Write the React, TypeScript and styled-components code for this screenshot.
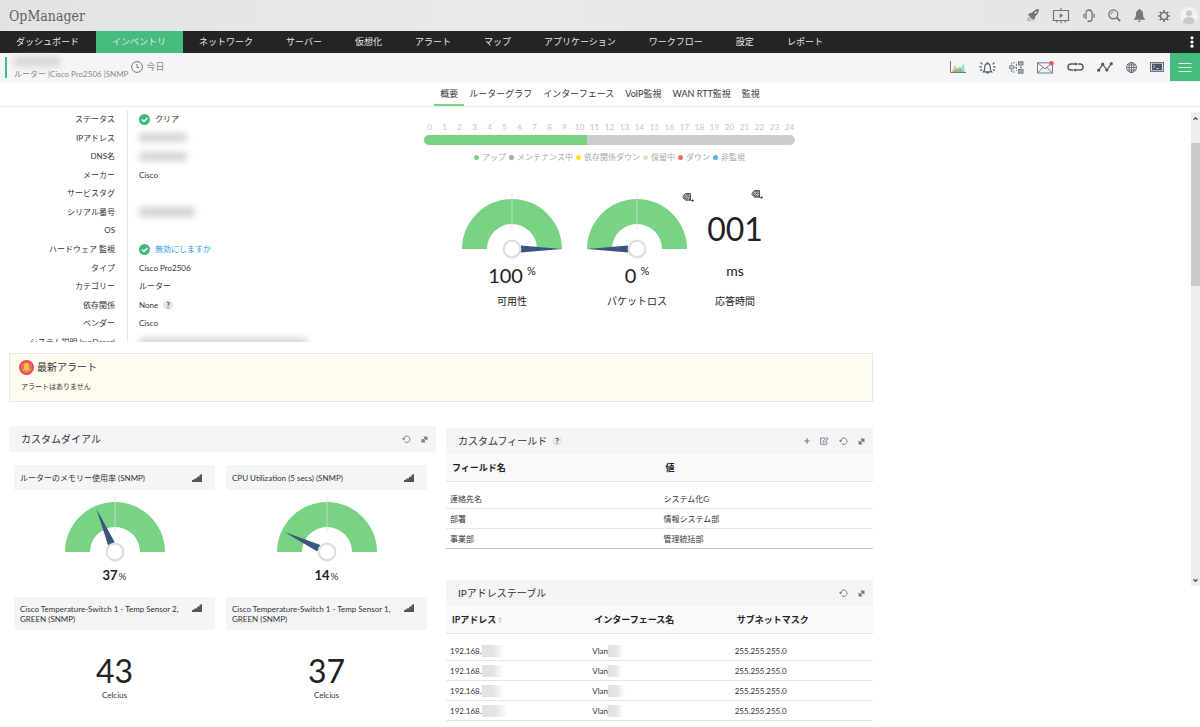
import React from 'react';
import styled, { createGlobalStyle } from 'styled-components';

const GREEN = '#46bb7e';
const GAUGE_GREEN = '#78d385';

const GlobalStyle = createGlobalStyle`
  * { box-sizing: border-box; }
  body {
    margin: 0;
    background: #fff;
    color: #333;
    font-family: Lato, "Noto Sans CJK JP", sans-serif;
    font-size: 8px;
    line-height: 12px;
  }
  h1, h2, h3, p, dl, dd, dt, ul { margin: 0; padding: 0; font-weight: 400; }
  ul { list-style: none; }
  a { color: inherit; text-decoration: none; }
  button { border: 0; padding: 0; margin: 0; background: none; font: inherit; color: inherit; }
  svg { display: block; flex: none; }
`;

/* ---------- top bars ---------- */

const Header = styled.header`
  display: flex;
  align-items: center;
  justify-content: space-between;
  height: 31px;
  padding: 0 2px 0 9px;
  background: linear-gradient(90deg, #e2e3e5, #e8e9eb 40%, #e4e5e7);
`;

const Brand = styled.h1`
  color: #606266;
  font-family: "Roboto Slab", "DejaVu Serif Condensed", "DejaVu Serif", serif;
  font-size: 14px;
  line-height: 20px;
`;

const HeaderTools = styled.div`
  display: flex;
  align-items: center;
  gap: 13px;
  color: #737579;
`;

const IconButton = styled.button`
  display: flex;
  align-items: center;
  justify-content: center;
  flex: none;
`;

const AvatarButton = styled(IconButton)`
  margin-left: -3px;
`;

const MainNav = styled.nav`
  display: flex;
  justify-content: space-between;
  height: 22px;
  background: #242424;
  color: #e8e8e8;
  font-size: 9px;
`;

const NavList = styled.ul`
  display: flex;
`;

const NavLink = styled.a<{ $active?: boolean }>`
  display: flex;
  align-items: center;
  height: 22px;
  padding: 0 17px 0 16px;
  white-space: nowrap;
  background: ${(p) => (p.$active ? GREEN : 'transparent')};
`;

const KebabButton = styled(IconButton)`
  width: 17px;
`;

const DeviceBar = styled.section`
  display: flex;
  align-items: stretch;
  justify-content: space-between;
  height: 28px;
  background: #f4f5f7;
  color: #888;
`;

const DeviceInfo = styled.div`
  display: flex;
  align-items: center;
  padding-left: 5px;
`;

const DeviceTitle = styled.div`
  display: flex;
  flex-direction: column;
  justify-content: space-between;
  height: 21px;
  padding-left: 7px;
  border-left: 2px solid ${GREEN};
  white-space: nowrap;
  line-height: 8px;
`;

const Period = styled.button`
  display: flex;
  align-items: center;
  gap: 3px;
  margin-left: 3px;
  font-size: 9px;
`;

const DeviceTools = styled.div`
  display: flex;
  align-items: center;
  gap: 13px;
  color: #555b66;
`;

const MenuButton = styled(IconButton)`
  align-self: stretch;
  width: 30px;
  margin-left: -7px;
  background: ${GREEN};
  color: #fff;
`;

const Tabs = styled.nav`
  display: flex;
  justify-content: center;
  gap: 11px;
  height: 26px;
  border-top: 1px solid #f0f0f0;
  border-bottom: 1px solid #ececec;
  font-size: 9px;
`;

const Tab = styled.a<{ $active?: boolean }>`
  position: relative;
  display: flex;
  align-items: center;
  white-space: nowrap;
  &::after {
    content: '';
    display: ${(p) => (p.$active ? 'block' : 'none')};
    position: absolute;
    left: -6px;
    right: -6px;
    bottom: 0;
    height: 2px;
    background: ${GAUGE_GREEN};
  }
`;

/* ---------- page body ---------- */

const Body = styled.div`
  display: flex;
  align-items: flex-start;
`;

const Main = styled.main`
  flex: 1;
  min-width: 0;
  padding: 0 26.5% 5px 9px;
`;

const ScrollTrack = styled.div`
  display: flex;
  flex-direction: column;
  align-items: center;
  flex: none;
  width: 9px;
  height: 473px;
  margin-top: 6px;
  background: #eee;
  color: #555;
`;

const ScrollArrow = styled(IconButton)`
  width: 9px;
  height: 11px;
`;

const ScrollThumb = styled.div`
  width: 9px;
  height: 143px;
  margin: 19px 0 auto;
  background: #cbcbcb;
`;

const Overview = styled.section`
  display: grid;
  grid-template-columns: 415fr 371fr 78fr;
  height: 235px;
  overflow: hidden;
`;

const Details = styled.dl`
  display: grid;
  grid-template-columns: 119px 1fr;
  grid-template-rows: repeat(13, 1fr);
  height: 241px;
  margin-top: 3px;
`;

const Term = styled.dt`
  display: flex;
  align-items: center;
  justify-content: flex-end;
  padding-right: 12px;
  border-right: 1px solid #e6e6e6;
  white-space: nowrap;
`;

const Value = styled.dd`
  display: flex;
  align-items: center;
  gap: 5px;
  padding-left: 11px;
`;

const BlueLink = styled.a`
  color: #2a98f0;
`;

const Redacted = styled.span<{ $w: number; $h?: number }>`
  display: block;
  width: ${(p) => p.$w}px;
  height: ${(p) => p.$h ?? 9}px;
  border-radius: 3px;
  background: #d4d4d4;
  filter: blur(3px);
`;

const HelpButton = styled.button`
  flex: none;
  width: 10px;
  height: 10px;
  border-radius: 50%;
  background: #e6e7e8;
  color: #333;
  font-size: 7px;
  font-weight: 700;
  line-height: 10px;
  text-align: center;
`;

const Availability = styled.div`
  display: flex;
  flex-direction: column;
  min-width: 0;
  padding-top: 14px;
`;

const Hours = styled.div`
  display: flex;
  justify-content: space-between;
  margin: 0 -2px;
  color: #c4c4c4;
`;

const Hour = styled.span`
  width: 15px;
  text-align: center;
`;

const UptimeBar = styled.div`
  display: flex;
  height: 10px;
  margin-top: 2px;
  border-radius: 5px;
  background: #cdcdcd;
  overflow: hidden;
`;

const UptimeFill = styled.div`
  width: 44%;
  background: ${GAUGE_GREEN};
`;

const Legend = styled.ul`
  display: flex;
  justify-content: center;
  gap: 3px;
  margin-top: 6px;
  color: #a8a8a8;
  white-space: nowrap;
`;

const LegendItem = styled.li<{ $color: string }>`
  display: flex;
  align-items: center;
  gap: 3px;
  &::before {
    content: '';
    width: 5px;
    height: 5px;
    border-radius: 50%;
    background: ${(p) => p.$color};
  }
`;

const Meters = styled.div`
  display: flex;
  gap: 15px;
  margin-top: 29px;
  padding-left: 33px;
`;

const Meter = styled.figure`
  position: relative;
  display: flex;
  flex-direction: column;
  align-items: center;
  justify-content: flex-end;
  min-width: 56px;
  margin: 0;
  color: #222;
`;

const MeterValue = styled.div`
  display: flex;
  align-items: flex-start;
  gap: 4px;
  height: 24px;
  margin-top: 4px;
  font-size: 20px;
  line-height: 24px;
`;

const MeterUnit = styled.sup`
  font-size: 11px;
  line-height: 16px;
  vertical-align: baseline;
`;

const MeterNumber = styled.div`
  font-size: 32px;
  line-height: 40px;
`;

const MeterMs = styled.div`
  margin-top: 12px;
  font-size: 14px;
  line-height: 20px;
`;

const MeterLabel = styled.figcaption<{ $gap?: number }>`
  margin-top: ${(p) => p.$gap ?? 7}px;
  font-size: 10px;
  line-height: 14px;
`;

const MeterAction = styled(IconButton)<{ $top: number; $right: number }>`
  position: absolute;
  top: ${(p) => p.$top}px;
  right: ${(p) => p.$right}px;
`;

const AlertBox = styled.section`
  display: flex;
  flex-direction: column;
  gap: 5px;
  height: 49px;
  margin-top: 11px;
  padding: 5px 9px;
  border: 1px solid #e9e8e4;
  background: #fffbee;
`;

const AlertTitle = styled.h2`
  display: flex;
  align-items: center;
  gap: 3px;
  font-size: 10px;
  line-height: 16px;
`;

const AlertText = styled.p`
  padding-left: 2px;
  font-size: 7px;
`;

const Widgets = styled.div`
  display: grid;
  grid-template-columns: 1fr 1fr;
  gap: 10px;
  margin-top: 24px;
`;

const Column = styled.div<{ $top?: number }>`
  min-width: 0;
  padding-top: ${(p) => p.$top ?? 0}px;
`;

const Widget = styled.section`
  & + & { margin-top: 31px; }
`;

const WidgetHeader = styled.header`
  display: flex;
  align-items: center;
  justify-content: space-between;
  height: 26px;
  padding: 0 8px 0 12px;
  background: #f4f5f7;
  color: #7b7d81;
`;

const WidgetTitle = styled.h2`
  display: flex;
  align-items: center;
  gap: 5px;
  color: #333;
  font-size: 10px;
  line-height: 16px;
`;

const WidgetTools = styled.div`
  display: flex;
  align-items: center;
  gap: 10px;
`;

const Dials = styled.div`
  display: grid;
  grid-template-columns: 1fr 1fr;
  column-gap: 11px;
  padding: 13px 9px 0 5px;
`;

const Dial = styled.article<{ $tall?: boolean }>`
  display: flex;
  flex-direction: column;
  align-items: center;
  height: ${(p) => (p.$tall ? 'auto' : '132px')};
`;

const DialHeader = styled.header<{ $tall?: boolean }>`
  display: flex;
  align-items: ${(p) => (p.$tall ? 'flex-start' : 'center')};
  justify-content: space-between;
  align-self: stretch;
  gap: 8px;
  height: ${(p) => (p.$tall ? 33 : 25)}px;
  margin-bottom: ${(p) => (p.$tall ? 22 : 5)}px;
  padding: ${(p) => (p.$tall ? 7 : 0)}px 13px 0 6px;
  background: #f4f5f7;
  color: #333;
`;

const DialTitle = styled.h3`
  font-size: 8px;
  line-height: 10px;
`;

const DialPercent = styled.div`
  margin-top: 5px;
  font-size: 10px;
  line-height: 16px;
`;

const DialStrong = styled.strong`
  margin-right: 1px;
  color: #222;
  font-size: 13px;
  font-weight: 700;
`;

const DialNumber = styled.div`
  color: #222;
  font-size: 32px;
  line-height: 37px;
`;

const Table = styled.table`
  width: 100%;
  table-layout: fixed;
  margin-top: 1px;
  border-collapse: separate;
  border-spacing: 0;
`;

const HeadCell = styled.th`
  height: 27px;
  padding: 0 0 0 6px;
  border-bottom: 1px solid #e4e4e4;
  background: #f9f9f9;
  color: #222;
  font-size: 9px;
  font-weight: 700;
  text-align: left;
  vertical-align: middle;
`;

const TableBody = styled.tbody`
  &::before {
    content: '';
    display: block;
    height: 7px;
  }
`;

const Row = styled.tr<{ $dark?: boolean }>`
  & > td { border-bottom: 1px solid ${(p) => (p.$dark ? '#c4c4c4' : '#e6e6e6')}; }
`;

const Cell = styled.td`
  height: 20px;
  padding: 0 0 0 4px;
  vertical-align: middle;
`;

const CellLine = styled.span`
  display: flex;
  align-items: center;
`;

const HeadLine = styled(CellLine)`
  gap: 2px;
`;

const CellMask = styled.span<{ $w: number }>`
  width: ${(p) => p.$w}px;
  height: 12px;
  background: linear-gradient(90deg, #dfe1e3, #e3e4e6 50%, #fff);
`;

/* ---------- icons ---------- */

const RocketIcon = () => (
  <svg width="12" height="13" viewBox="0 0 12 13" fill="currentColor">
    <path d="M12 0C8.600 .2 6.300 1.600 4.800 4H2.600L.8 6.600 3 6.800l-.5 1 1.900 1.900 1-.5.3 2.200L8.100 9.600V7.400C10.600 5.800 11.900 3.400 12 0ZM8.700 2.400a1.100 1.100 0 1 1 0 2.200 1.100 1.100 0 0 1 0-2.200Z" fillRule="evenodd" />
    <path d="M1.900 8.600.3 10.200M2.900 9.600.5 12M3.900 10.700 2.300 12.300" stroke="currentColor" strokeWidth=".9" />
  </svg>
);

const ScreenIcon = () => (
  <svg width="18" height="16" viewBox="0 0 18 16" fill="none" stroke="currentColor" strokeWidth="1.200">
    <path d="M9 0v2M1 2.500h16M1.500 2.500v9.800M16.500 2.500v9.800M.5 12.500h17M9 12.500v2.800M5.500 12.500l-1 2M12.500 12.500l1 2" />
    <path d="M7.700 5v5l3.400-2.500Z" fill="currentColor" stroke="none" />
  </svg>
);

const HeadsetIcon = () => (
  <svg width="12" height="14" viewBox="0 0 12 14" fill="none" stroke="currentColor" strokeWidth="1.300">
    <path d="M3 10V4.200C3 2 4.200 1 6 1s3 1 3 3.200V10c0 1.600-.9 2.300-2.600 2.300" />
    <path d="M1 4.800v4M11 4.800v4" strokeWidth="1.300" />
    <rect x="4.600" y="11.400" width="2.200" height="1.800" fill="currentColor" stroke="none" />
  </svg>
);

const SearchIcon = () => (
  <svg width="13" height="13" viewBox="0 0 13 13" fill="none" stroke="currentColor">
    <circle cx="5.300" cy="5.300" r="4.500" strokeWidth="1.300" />
    <path d="M5.300 3A2.300 2.300 0 0 0 3 5.300" strokeWidth=".9" />
    <path d="m8.700 8.700 3.500 3.500" strokeWidth="1.900" />
  </svg>
);

const BellIcon = () => (
  <svg width="11" height="13" viewBox="0 0 11 13" fill="currentColor">
    <path d="M5.500 0c.6 0 1 .4 1 1 1.600.5 2.500 1.900 2.500 3.800 0 3 .6 4 2 5.200v.8H0V10c1.400-1.200 2-2.200 2-5.200C2 2.900 2.900 1.500 4.500 1c0-.6.4-1 1-1ZM4 11.400h3c-.1.900-.7 1.500-1.500 1.500S4.100 12.300 4 11.400Z" />
  </svg>
);

const GearIcon = () => (
  <svg width="12" height="12" viewBox="0 0 12 12" fill="none" stroke="currentColor">
    <circle cx="6" cy="6" r="3.500" strokeWidth="1.700" />
    {[0, 45, 90, 135, 180, 225, 270, 315].map((a) => (
      <path key={a} d="M6 0v2" strokeWidth="1.700" transform={`rotate(${a} 6 6)`} />
    ))}
  </svg>
);

const AvatarIcon = () => (
  <svg width="18" height="18" viewBox="0 0 18 18">
    <circle cx="9" cy="9" r="9" fill="#f3f3f3" />
    <circle cx="9" cy="6.300" r="3" fill="#c9cacb" />
    <path d="M3 15.500c0-3.600 2-5.500 6-5.500s6 1.900 6 5.500A9 9 0 0 1 9 17.600a9 9 0 0 1-6-2.100Z" fill="#c9cacb" />
  </svg>
);

const KebabIcon = () => (
  <svg width="4" height="12" viewBox="0 0 4 12" fill="#fff">
    <circle cx="2" cy="1.800" r="1.600" /><circle cx="2" cy="6" r="1.600" /><circle cx="2" cy="10.200" r="1.600" />
  </svg>
);

const ClockIcon = () => (
  <svg width="12" height="12" viewBox="0 0 12 12" fill="none" stroke="#777" strokeWidth="1">
    <circle cx="6" cy="6" r="5.400" /><path d="M6 3v3.500h2" />
  </svg>
);

const AreaChartIcon = () => (
  <svg width="16" height="12" viewBox="0 0 16 12">
    <path d="M1.500 11 5 4l3 4 1.500-1.500L13 11Z" fill="#eec59a" />
    <path d="m6.500 11 3-5.500L11.200 7l2.300-5L15 11Z" fill="#8fe0cd" />
    <path d="M2 11 6.500 8l2.300 0 1.300-1.500L13 11Z" fill="#8bbf86" />
    <path d="M.5 0v11.500H16" fill="none" stroke="#777" />
  </svg>
);

const AlarmIcon = () => (
  <svg width="17" height="13" viewBox="0 0 17 13" fill="none" stroke="currentColor" strokeWidth="1.200">
    <path d="M4.500 10.800c1-.9 1.300-1.900 1.300-4.600 0-2 1-3.500 2.700-3.500s2.700 1.500 2.700 3.500c0 2.700.3 3.700 1.300 4.600ZM8.500 1v1.600M7.200 12h2.600" />
    <path d="M3.300 3.300 1.500 1.300M2.800 5.800H.3M3 8.200l-1.800 1.500M13.700 3.300l1.800-2M14.200 5.800h2.500M14 8.200l1.800 1.500" />
  </svg>
);

const TopologyIcon = () => (
  <svg width="15" height="13" viewBox="0 0 15 13" fill="none" stroke="#777c83" strokeWidth="1">
    <rect x=".7" y="4.500" width="4" height="3.600" rx="1" fill="#c9ccd0" />
    <rect x="9.500" y=".8" width="4.500" height="3.200" fill="#a9adb2" />
    <rect x="9.500" y="8.600" width="4.500" height="3.600" fill="#a9adb2" />
    <path d="M2.700 3.500V1.800h5M2.700 9v2h4M5.500 6.300h2.200M7.500 3v7" strokeDasharray="2 1" />
    <path d="M11.800 5.200v2.300M10.800 6.400h2" />
  </svg>
);

const MailIcon = () => (
  <svg width="17" height="13" viewBox="0 0 17 13" fill="none" stroke="#777c83" strokeWidth="1">
    <rect x=".5" y="1.800" width="15" height="10.200" />
    <path d="m.7 2 7.300 5.800L15.300 2M.7 11.800 6 6.500M15.300 11.800 10 6.500" />
    <circle cx="14.500" cy="2.300" r="2.300" fill="#f0524f" stroke="none" />
  </svg>
);

const LoopIcon = () => (
  <svg width="17" height="10" viewBox="0 0 17 10" fill="none" stroke="currentColor" strokeWidth="1.500">
    <path d="M6 8H4a3 3 0 0 1 0-6h5.500M11 2h2a3 3 0 0 1 0 6H7.500" />
    <path d="M8.500.3v3.400L11 2ZM8.500 6.300v3.400L6 8Z" fill="currentColor" stroke="none" />
  </svg>
);

const PolylineIcon = () => (
  <svg width="16" height="10" viewBox="0 0 16 10" fill="currentColor">
    <path d="m1.700 8.200 4-5.800 4.200 5.400 4.400-6" fill="none" stroke="currentColor" strokeWidth="1.200" />
    <circle cx="1.700" cy="8.200" r="1.600" /><circle cx="5.700" cy="2.200" r="1.600" />
    <circle cx="9.900" cy="8" r="1.600" /><circle cx="14.300" cy="1.700" r="1.600" />
  </svg>
);

const GlobeIcon = () => (
  <svg width="11" height="11" viewBox="0 0 11 11" fill="none" stroke="currentColor" strokeWidth=".8">
    <circle cx="5.500" cy="5.500" r="5" /><ellipse cx="5.500" cy="5.500" rx="2.500" ry="5" />
    <path d="M5.500.5v10M.5 5.500h10M1.300 3h8.400M1.300 8h8.400" />
  </svg>
);

const TerminalIcon = () => (
  <svg width="14" height="10" viewBox="0 0 14 10">
    <rect x=".5" y=".5" width="13" height="9" fill="#dfe1e5" stroke="#6e7480" />
    <rect x="2" y="1.700" width="10" height="6.600" fill="#4a5464" />
    <path d="m3.200 3 1.800 1.500-1.800 1.500M6.300 6.500h2.600" fill="none" stroke="#dfe3e8" strokeWidth=".8" />
  </svg>
);

const MenuIcon = () => (
  <svg width="14" height="9" viewBox="0 0 14 9" stroke="#d8f5e4" strokeWidth="1">
    <path d="M.5.5h13M.5 4.500h13M.5 8.500h13" />
  </svg>
);

const CheckIcon = () => (
  <svg width="11" height="11" viewBox="0 0 11 11">
    <circle cx="5.500" cy="5.500" r="5.500" fill="#41b97c" />
    <path d="m2.900 5.500 2 2 3.400-3.600" fill="none" stroke="#fff" strokeWidth="1.500" />
  </svg>
);

const AlertBellIcon = () => (
  <svg width="15" height="15" viewBox="0 0 15 15">
    <circle cx="7.500" cy="7.500" r="7.500" fill="#f0414b" />
    <circle cx="7.500" cy="7.500" r="6" fill="#e96a70" />
    <path d="M7.500 3c1.700 0 2.400 1.300 2.400 2.900 0 2 .3 2.900 1.100 3.700v.7H4v-.7c.8-.8 1.100-1.700 1.100-3.700C5.100 4.300 5.800 3 7.500 3ZM6.500 10.700h2c0 .7-.4 1.100-1 1.100s-1-.4-1-1.100Z" fill="#fbc531" />
  </svg>
);

const RefreshIcon = () => (
  <svg width="9" height="8" viewBox="0 0 9 8" fill="none" stroke="currentColor" strokeWidth="1">
    <path d="M1.600 4.200a3.200 3.200 0 1 1 1.200 2.500" />
    <path d="M0 3.200h3.300L1.600 5.400Z" fill="currentColor" stroke="none" />
  </svg>
);

const ExpandIcon = () => (
  <svg width="7" height="7" viewBox="0 0 7 7" fill="currentColor">
    <path d="M2.200.5H6.500v4.300L5.100 3.400 4.400 4.100 2.900 2.600l.7-.7ZM.5 2.200l1.400 1.400.7-.7 1.500 1.500-.7.700 1.400 1.400H.5Z" />
  </svg>
);

const PlusIcon = () => (
  <svg width="6" height="6" viewBox="0 0 6 6" stroke="currentColor" strokeWidth="1.200">
    <path d="M3 .3v5.400M.3 3h5.400" />
  </svg>
);

const EditIcon = () => (
  <svg width="9" height="8" viewBox="0 0 9 8" fill="none" stroke="currentColor" strokeWidth=".9">
    <path d="M5 1H.6v6.300h6.300V4.500" /><path d="m3 5.300.4-1.600L7 .5l1.300 1.200L4.700 5Z" />
  </svg>
);

const StepsIcon = () => (
  <svg width="10" height="8" viewBox="0 0 10 8" fill="#555">
    <path d="M0 8V6.200l2.600-1V4.400l2.500-.2V2.800l2.400-.3V1L10 0v8Z" />
  </svg>
);

const StampIcon = () => (
  <svg width="12" height="9" viewBox="0 0 12 9" fill="none" stroke="#444" strokeWidth=".9">
    <path d="M3.300.6h5.200v6.600H3.600L.8 4.500l1-2.300Z" fill="#bbb" />
    <path d="M2.300 2.500 6.500 6.700M3.800 1.800h3.400M5.300 3.400h2.300M2 4.300l2.600 2.300M7 5l1.500 2.300 1.200.5" />
    <circle cx="10.700" cy="7.600" r="1" fill="#222" stroke="none" />
  </svg>
);

const SortIcon = () => (
  <svg width="4" height="6" viewBox="0 0 4 6" fill="#c4c4c4">
    <path d="M2 0 4 2.600H0ZM2 6 .5 3.600h3Z" />
  </svg>
);

const ArrowIcon = ({ down }: { down?: boolean }) => (
  <svg width="5" height="5" viewBox="0 0 5 5" fill="none" stroke="currentColor" strokeWidth="1.400">
    <path d={down ? 'm.5 1.300 2 2 2-2' : 'm.5 3.700 2-2 2 2'} />
  </svg>
);

/* Half-circle gauge; the needle sweeps from left (0) to right (100). */
const Gauge = ({ value, reach = 50 }: { value: number; reach?: number }) => (
  <svg width="110" height="67" viewBox="0 0 110 67">
    <path d="M5 57a50 50 0 0 1 100 0H80a25 25 0 0 0-50 0Z" fill={GAUGE_GREEN} />
    <path d="M55 1v37" stroke="#dcdcdc" strokeOpacity=".7" />
    <path
      d={`M46 53.400 L${55 - reach} 57 L46 60.600Z`}
      fill="#3a567f"
      transform={`rotate(${value * 1.8} 55 57)`}
    />
    <circle cx="55" cy="57" r="8.300" fill="#fff" stroke="#dedede" strokeWidth="2.200" />
  </svg>
);

/* ---------- data ---------- */

const navItems = ['ダッシュボード', 'インベントリ', 'ネットワーク', 'サーバー', '仮想化', 'アラート', 'マップ', 'アプリケーション', 'ワークフロー', '設定', 'レポート'];
const tabs = ['概要', 'ルーターグラフ', 'インターフェース', 'VoIP監視', 'WAN RTT監視', '監視'];

const details: [string, React.ReactNode][] = [
  ['ステータス', <><CheckIcon />クリア</>],
  ['IPアドレス', <Redacted $w={48} />],
  ['DNS名', <Redacted $w={48} />],
  ['メーカー', 'Cisco'],
  ['サービスタグ', null],
  ['シリアル番号', <Redacted $w={56} $h={10} />],
  ['OS', null],
  ['ハードウェア 監視', <><CheckIcon /><BlueLink href="#">無効にしますか</BlueLink></>],
  ['タイプ', 'Cisco Pro2506'],
  ['カテゴリー', 'ルーター'],
  ['依存関係', <>None <HelpButton type="button">?</HelpButton></>],
  ['ベンダー', 'Cisco'],
  ['システム説明 (sysDescr)', <Redacted $w={168} $h={8} />],
];

const legend: [string, string][] = [
  ['アップ', '#78d385'],
  ['メンテナンス中', '#aaa'],
  ['依存関係ダウン', '#fbe423'],
  ['保留中', '#f3d9bf'],
  ['ダウン', '#f06a62'],
  ['非監視', '#56b1f5'],
];

const fields = [
  ['連絡先名', 'システム化G'],
  ['部署', '情報システム部'],
  ['事業部', '管理統括部'],
];

/* Widths of the masked parts of each address and VLAN name. */
const addresses = [
  [22, 16],
  [22, 14],
  [22, 17],
  [26, 15],
];

const App = () => (
  <>
    <GlobalStyle />
    <Header>
      <Brand>OpManager</Brand>
      <HeaderTools>
        <IconButton type="button" aria-label="Quick start"><RocketIcon /></IconButton>
        <IconButton type="button" aria-label="Presentation"><ScreenIcon /></IconButton>
        <IconButton type="button" aria-label="Support"><HeadsetIcon /></IconButton>
        <IconButton type="button" aria-label="Search"><SearchIcon /></IconButton>
        <IconButton type="button" aria-label="Notifications"><BellIcon /></IconButton>
        <IconButton type="button" aria-label="Settings"><GearIcon /></IconButton>
        <AvatarButton type="button" aria-label="Profile"><AvatarIcon /></AvatarButton>
      </HeaderTools>
    </Header>

    <MainNav>
      <NavList>
        {navItems.map((item, i) => (
          <li key={item}><NavLink href="#" $active={i === 1}>{item}</NavLink></li>
        ))}
      </NavList>
      <KebabButton type="button" aria-label="More"><KebabIcon /></KebabButton>
    </MainNav>

    <DeviceBar>
      <DeviceInfo>
        <DeviceTitle>
          <Redacted $w={46} $h={9} />
          <span>ルーター |Cisco Pro2506 |SNMP</span>
        </DeviceTitle>
        <Period type="button"><ClockIcon />今日</Period>
      </DeviceInfo>
      <DeviceTools>
        <IconButton type="button" aria-label="Graphs"><AreaChartIcon /></IconButton>
        <IconButton type="button" aria-label="Alarms"><AlarmIcon /></IconButton>
        <IconButton type="button" aria-label="Topology"><TopologyIcon /></IconButton>
        <IconButton type="button" aria-label="Mail"><MailIcon /></IconButton>
        <IconButton type="button" aria-label="Ping"><LoopIcon /></IconButton>
        <IconButton type="button" aria-label="Trace route"><PolylineIcon /></IconButton>
        <IconButton type="button" aria-label="Browse"><GlobeIcon /></IconButton>
        <IconButton type="button" aria-label="Terminal"><TerminalIcon /></IconButton>
        <MenuButton type="button" aria-label="Menu"><MenuIcon /></MenuButton>
      </DeviceTools>
    </DeviceBar>

    <Tabs>
      {tabs.map((tab, i) => (
        <Tab key={tab} href="#" $active={i === 0}>{tab}</Tab>
      ))}
    </Tabs>

    <Body>
      <Main>
        <Overview>
          <Details>
            {details.map(([term, value]) => (
              <React.Fragment key={term}>
                <Term>{term}</Term>
                <Value>{value}</Value>
              </React.Fragment>
            ))}
          </Details>

          <Availability>
            <Hours>
              {Array.from({ length: 25 }, (_, h) => <Hour key={h}>{h}</Hour>)}
            </Hours>
            <UptimeBar><UptimeFill /></UptimeBar>
            <Legend>
              {legend.map(([label, color]) => (
                <LegendItem key={label} $color={color}>{label}</LegendItem>
              ))}
            </Legend>
            <Meters>
              <Meter>
                <Gauge value={100} />
                <MeterValue>100<MeterUnit>%</MeterUnit></MeterValue>
                <MeterLabel>可用性</MeterLabel>
              </Meter>
              <Meter>
                <Gauge value={0} />
                <MeterAction type="button" aria-label="Edit packet loss" $top={1} $right={-2}><StampIcon /></MeterAction>
                <MeterValue>0<MeterUnit>%</MeterUnit></MeterValue>
                <MeterLabel>パケットロス</MeterLabel>
              </Meter>
              <Meter>
                <MeterAction type="button" aria-label="Edit response time" $top={-2} $right={0}><StampIcon /></MeterAction>
                <MeterNumber>001</MeterNumber>
                <MeterMs>ms</MeterMs>
                <MeterLabel $gap={13}>応答時間</MeterLabel>
              </Meter>
            </Meters>
          </Availability>
        </Overview>

        <AlertBox>
          <AlertTitle><AlertBellIcon />最新アラート</AlertTitle>
          <AlertText>アラートはありません</AlertText>
        </AlertBox>

        <Widgets>
          <Column>
            <Widget>
              <WidgetHeader>
                <WidgetTitle>カスタムダイアル</WidgetTitle>
                <WidgetTools>
                  <IconButton type="button" aria-label="Refresh"><RefreshIcon /></IconButton>
                  <IconButton type="button" aria-label="Expand"><ExpandIcon /></IconButton>
                </WidgetTools>
              </WidgetHeader>
              <Dials>
                <Dial>
                  <DialHeader><DialTitle>ルーターのメモリー使用率 (SNMP)</DialTitle><StepsIcon /></DialHeader>
                  <Gauge value={37} reach={47} />
                  <DialPercent><DialStrong>37</DialStrong>%</DialPercent>
                </Dial>
                <Dial>
                  <DialHeader><DialTitle>CPU Utilization (5 secs) (SNMP)</DialTitle><StepsIcon /></DialHeader>
                  <Gauge value={14} reach={47} />
                  <DialPercent><DialStrong>14</DialStrong>%</DialPercent>
                </Dial>
                <Dial $tall>
                  <DialHeader $tall><DialTitle>Cisco Temperature-Switch 1 - Temp Sensor 2, GREEN (SNMP)</DialTitle><StepsIcon /></DialHeader>
                  <DialNumber>43</DialNumber>
                  <div>Celcius</div>
                </Dial>
                <Dial $tall>
                  <DialHeader $tall><DialTitle>Cisco Temperature-Switch 1 - Temp Sensor 1, GREEN (SNMP)</DialTitle><StepsIcon /></DialHeader>
                  <DialNumber>37</DialNumber>
                  <div>Celcius</div>
                </Dial>
              </Dials>
            </Widget>
          </Column>

          <Column $top={2}>
            <Widget>
              <WidgetHeader>
                <WidgetTitle>カスタムフィールド<HelpButton type="button">?</HelpButton></WidgetTitle>
                <WidgetTools>
                  <IconButton type="button" aria-label="Add"><PlusIcon /></IconButton>
                  <IconButton type="button" aria-label="Edit"><EditIcon /></IconButton>
                  <IconButton type="button" aria-label="Refresh"><RefreshIcon /></IconButton>
                  <IconButton type="button" aria-label="Expand"><ExpandIcon /></IconButton>
                </WidgetTools>
              </WidgetHeader>
              <Table>
                <thead>
                  <tr><HeadCell>フィールド名</HeadCell><HeadCell>値</HeadCell></tr>
                </thead>
                <TableBody>
                  {fields.map(([name, value], i) => (
                    <Row key={name} $dark={i === fields.length - 1}>
                      <Cell>{name}</Cell>
                      <Cell>{value}</Cell>
                    </Row>
                  ))}
                </TableBody>
              </Table>
            </Widget>

            <Widget>
              <WidgetHeader>
                <WidgetTitle>IPアドレステーブル</WidgetTitle>
                <WidgetTools>
                  <IconButton type="button" aria-label="Refresh"><RefreshIcon /></IconButton>
                  <IconButton type="button" aria-label="Expand"><ExpandIcon /></IconButton>
                </WidgetTools>
              </WidgetHeader>
              <Table>
                <thead>
                  <tr>
                    <HeadCell><HeadLine>IPアドレス<SortIcon /></HeadLine></HeadCell>
                    <HeadCell>インターフェース名</HeadCell>
                    <HeadCell>サブネットマスク</HeadCell>
                  </tr>
                </thead>
                <TableBody>
                  {addresses.map(([ipMask, vlanMask], i) => (
                    <Row key={i}>
                      <Cell><CellLine>192.168.<CellMask $w={ipMask} /></CellLine></Cell>
                      <Cell><CellLine>Vlan<CellMask $w={vlanMask} /></CellLine></Cell>
                      <Cell>255.255.255.0</Cell>
                    </Row>
                  ))}
                </TableBody>
              </Table>
            </Widget>
          </Column>
        </Widgets>
      </Main>

      <ScrollTrack>
        <ScrollArrow type="button" aria-label="Scroll up"><ArrowIcon /></ScrollArrow>
        <ScrollThumb />
        <ScrollArrow type="button" aria-label="Scroll down"><ArrowIcon down /></ScrollArrow>
      </ScrollTrack>
    </Body>
  </>
);

export default App;
